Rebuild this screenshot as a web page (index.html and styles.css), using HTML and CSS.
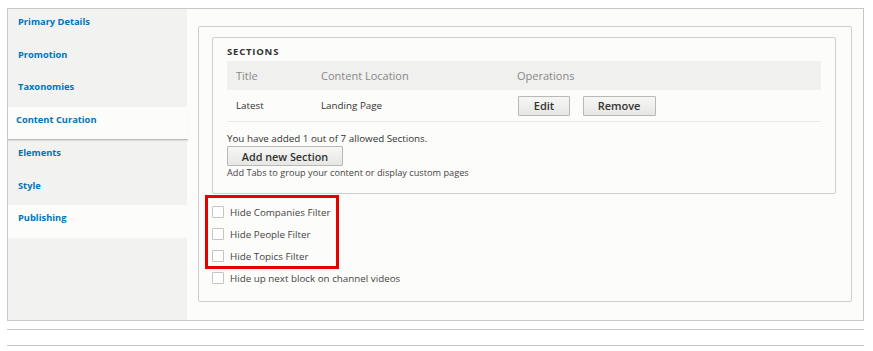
FILE: index.html
```html
<!DOCTYPE html>
<html lang="en">
<head>
    <meta charset="UTF-8">
    <meta name="viewport" content="width=device-width, initial-scale=1.0">
    <title>Content Curation</title>
    <link rel="stylesheet" href="styles.css">
</head>
<body>
    <div class="tabs-box">
        <ul class="vertical-tabs">
            <li><a href="#">Primary Details</a></li>
            <li><a href="#">Promotion</a></li>
            <li><a href="#">Taxonomies</a></li>
            <li class="selected"><a href="#">Content Curation</a></li>
            <li><a href="#">Elements</a></li>
            <li><a href="#">Style</a></li>
            <li class="hover"><a href="#">Publishing</a></li>
        </ul>

        <div class="tab-pane">
            <div class="fieldset">
                <div class="sections">
                    <div class="sections-title">Sections</div>
                    <table class="sections-table">
                        <thead>
                            <tr>
                                <th class="col-title">Title</th>
                                <th class="col-location">Content Location</th>
                                <th>Operations</th>
                            </tr>
                        </thead>
                        <tbody>
                            <tr>
                                <td>Latest</td>
                                <td>Landing Page</td>
                                <td>
                                    <button class="btn btn-edit">Edit</button>
                                    <button class="btn btn-remove">Remove</button>
                                </td>
                            </tr>
                        </tbody>
                    </table>
                    <p class="count">You have added 1 out of 7 allowed Sections.</p>
                    <button class="btn btn-add">Add new Section</button>
                    <p class="description">Add Tabs to group your content or display custom pages</p>
                </div>

                <div class="filters highlighted">
                    <label class="check"><input type="checkbox"> Hide Companies Filter</label>
                    <label class="check"><input type="checkbox"> Hide People Filter</label>
                    <label class="check"><input type="checkbox"> Hide Topics Filter</label>
                </div>
                <label class="check"><input type="checkbox"> Hide up next block on channel videos</label>
            </div>
        </div>
    </div>

    <div class="rule"></div>
    <div class="rule rule-last"></div>
</body>
</html>
```

FILE: styles.css
```css
/* General */
body {
    font-family: 'Open Sans', 'DejaVu Sans', sans-serif;
    background-color: #fff;
    color: #333;
    margin: 0;
    padding: 8px 9px 0 7px;
    font-size: 9.8px;
}

/* Outer box with vertical tabs */
.tabs-box {
    display: flex;
    border: 1px solid #c8c8c6;
    height: 311px;
    background-color: #fcfcfa;
}

.vertical-tabs {
    list-style: none;
    margin: 0;
    padding: 0;
    width: 179px;
    background-color: #f2f2f0;
    flex-shrink: 0;
}

.vertical-tabs li {
    height: 32.5px;
    box-sizing: border-box;
    display: flex;
    align-items: center;
    padding: 0 0 7px 10px;
}

.vertical-tabs a {
    color: #0074bd;
    font-weight: bold;
    font-size: 9.3px;
    text-decoration: none;
}

.vertical-tabs li.selected {
    background-color: #fcfcfa;
    padding-left: 8px;
    margin-right: -1px;
    height: 33.5px;
    border-bottom: 1px solid #bdbdbb;
    box-shadow: 0 1px 1px rgba(0, 0, 0, 0.08);
}

.vertical-tabs li.hover {
    background-color: #fcfcfa;
}

/* Main pane */
.tab-pane {
    flex: 1;
    padding: 17px 11px 18px 11px;
}

.fieldset {
    border: 1px solid #cfcfcd;
    border-radius: 2px;
    height: 100%;
    box-sizing: border-box;
    padding: 10px 15px 0 13px;
}

.sections {
    border: 1px solid #cfcfcd;
    border-radius: 2px;
    padding: 7px 14px 14px 14px;
    margin-bottom: 7px;
}

.sections-title {
    text-transform: uppercase;
    font-weight: bold;
    font-size: 9.5px;
    letter-spacing: 0.8px;
    color: #333;
    margin-bottom: 3px;
}

.sections-table {
    width: 100%;
    border-collapse: collapse;
}

.sections-table th {
    background-color: #f0f0ee;
    color: #888;
    font-weight: normal;
    font-size: 11px;
    text-align: left;
    height: 29px;
    padding: 0 9px;
}

.sections-table .col-title {
    width: 67px;
}

.sections-table .col-location {
    width: 178px;
}

.sections-table td {
    height: 31px;
    padding: 0 9px;
    border-bottom: 1px solid #e8e8e6;
}

.sections-table td:last-child {
    padding-left: 10px;
}

.count {
    margin: 10px 0 1px;
}

.description {
    margin: 0;
    color: #444;
    font-size: 9.2px;
}

/* Buttons */
.btn {
    font-family: inherit;
    font-size: 11px;
    font-weight: 600;
    color: #333;
    background: linear-gradient(#f7f7f5, #e6e6e4);
    border: 1px solid #b8b8b6;
    border-radius: 1px;
    height: 20px;
    padding: 0;
    cursor: pointer;
}

.btn-edit {
    width: 52px;
}

.btn-remove {
    width: 73px;
    margin-left: 10px;
}

.btn-add {
    width: 116px;
    height: 20px;
    font-size: 10.8px;
}

/* Checkboxes */
.filters {
    position: relative;
}

/* Red annotation box drawn over the three filter options */
.filters.highlighted::after {
    content: '';
    position: absolute;
    top: -6px;
    left: -7px;
    width: 134px;
    bottom: -2px;
    border: 3px solid #e80000;
    box-sizing: border-box;
    pointer-events: none;
}

.check {
    display: flex;
    align-items: center;
    height: 22px;
    color: #444;
}

.check input {
    appearance: none;
    width: 12px;
    height: 12px;
    margin: 0 6px 0 0;
    border: 1px solid #c4c4c2;
    border-radius: 1px;
    background-color: #fff;
}

/* Bottom rules */
.rule {
    border-top: 1px solid #c8c8c6;
    margin-top: 8px;
    height: 7px;
    margin-bottom: 0;
}

.rule-last {
    margin-top: 8px;
}
```
